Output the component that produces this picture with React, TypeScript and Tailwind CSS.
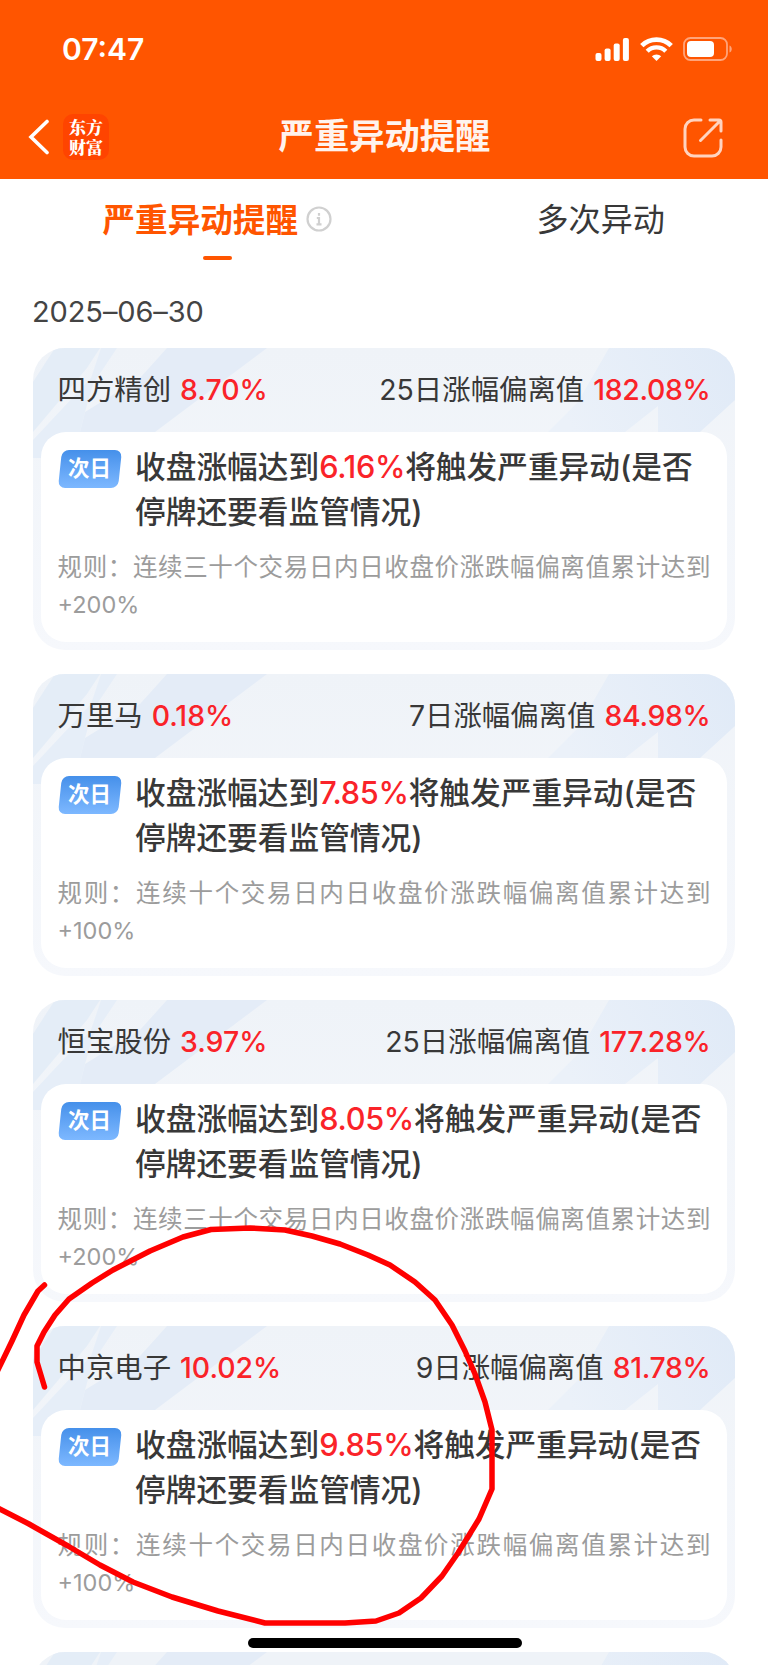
const alerts = [
  { name: '四方精创', change: '8.70%', days: '25', deviation: '182.08%', trigger: '6.16%', period: '三十', limit: '+200%' },
  { name: '万里马', change: '0.18%', days: '7', deviation: '84.98%', trigger: '7.85%', period: '十', limit: '+100%' },
  { name: '恒宝股份', change: '3.97%', days: '25', deviation: '177.28%', trigger: '8.05%', period: '三十', limit: '+200%' },
  { name: '中京电子', change: '10.02%', days: '9', deviation: '81.78%', trigger: '9.85%', period: '十', limit: '+100%' },
]

const StatusBar = () => (
  <div className="flex h-[96px] items-center justify-between pr-[35px] pl-[62px]">
    <span className="pt-[2px] text-[30px] leading-none font-semibold">07:47</span>
    <div className="flex items-center gap-[10px] pt-px">
      <svg width="35" height="24" viewBox="0 0 35 24" fill="currentColor">
        <rect x="0.5" y="16" width="6" height="8" rx="2" />
        <rect x="9.6" y="11.5" width="6" height="12.5" rx="2" />
        <rect x="18.7" y="6.5" width="6" height="17.5" rx="2" />
        <rect x="27.900" y="1" width="6" height="23" rx="2" />
      </svg>
      <svg width="33" height="24" viewBox="0 0 33 24" fill="none" stroke="currentColor">
        <path d="M1.8 8.6a21 21 0 0 1 29.4 0" strokeWidth="4.8" />
        <path d="M7.2 14.2a13.2 13.2 0 0 1 18.6 0" strokeWidth="4.4" />
        <path d="M16.5 24l-4.7-4.7a6.8 6.8 0 0 1 9.4 0z" fill="currentColor" stroke="none" />
      </svg>
      <svg width="50" height="24" viewBox="0 0 50 24" fill="none">
        <rect x="1" y="1" width="43" height="22" rx="6.5" stroke="#ffa47a" strokeWidth="1.8" />
        <rect x="4" y="4" width="27" height="16" rx="4" fill="#fff" />
        <path d="M46.5 8.5c3 1 3 6 0 7z" fill="#ffa47a" />
      </svg>
    </div>
  </div>
)

const NavBar = () => (
  <div className="flex h-[83px] items-center justify-between pr-[45px] pl-7">
    <div className="-mt-[2px] flex w-[101px] items-center gap-[14px]">
      <svg width="21" height="36" viewBox="0 0 21 36" fill="none" stroke="currentColor" strokeWidth="3.6">
        <path d="M19 2.500L3 18l16 15.500" strokeLinecap="round" strokeLinejoin="miter" />
      </svg>
      <div className="flex size-[46px] flex-col items-center justify-center rounded-[10px] bg-[#ff4400] font-['Noto_Serif_CJK_SC','Noto_Sans_CJK_SC',serif] text-[17px] leading-[20px] font-black">
        <span>东方</span>
        <span>财富</span>
      </div>
    </div>
    <h1 className="-mt-px pl-[18px] text-[35.300px] leading-none font-bold whitespace-nowrap text-[#fff3ee]">严重异动提醒</h1>
    <div className="flex w-[101px] justify-end">
      <svg width="40" height="40" viewBox="0 0 40 40" fill="none" stroke="#ffd3bf" strokeWidth="3">
        <path d="M18 2h-7a9 9 0 0 0-9 9v18a9 9 0 0 0 9 9h18a9 9 0 0 0 9-9v-7" strokeLinecap="round" />
        <path d="M27 2h9a2 2 0 0 1 2 2v9M37 3L17.500 22.500" strokeLinecap="round" />
      </svg>
    </div>
  </div>
)

const Tabs = () => (
  <div className="grid grid-cols-2 pt-[21px] leading-[40px]">
    <div className="flex flex-col pl-[102.500px]">
      <div className="flex items-center gap-[8px] text-[#ff5500]">
        <span className="text-[32.600px] font-bold">严重异动提醒</span>
        <svg className="-mt-[3px]" width="26" height="26" viewBox="0 0 26 26" fill="none" stroke="#d0d0d0" strokeWidth="2.2">
          <circle cx="13" cy="13" r="11.500" />
          <path d="M13 7v2.800M10.800 12H13v6M10.500 18.300h5" />
        </svg>
      </div>
      <div className="mt-4 ml-[100px] h-[4px] w-[29px] rounded-full bg-[#ff5500]" />
    </div>
    <div className="pl-[152.500px] text-[32.100px] text-[#383838]">多次异动</div>
  </div>
)

// Pale diagonal bands behind the card heading
const CardPattern = () => (
  <svg className="absolute inset-x-0 top-0" width="702" height="120" viewBox="0 0 702 120" fill="none">
    <path d="M22 0H67L54 20L0 84V34z" fill="#e4edf7" />
    <path d="M68 0H84L60 36L52 64L47 84L30 110H0V92L58 30z" fill="#e6eef8" />
    <path d="M134 0H234L122 84H47L52 64L107 30z" fill="#e4ecf7" />
    <path d="M576 0H702V52L667 84H625V58L592 84H515L545 54z" fill="url(#corner)" />
    <defs>
      <linearGradient id="corner" x1="700" y1="0" x2="540" y2="84" gradientUnits="userSpaceOnUse">
        <stop stopColor="#e0eaf7" />
        <stop offset="1" stopColor="#ebf1f9" />
      </linearGradient>
    </defs>
  </svg>
)

const Deviation = ({ alert }: { alert: (typeof alerts)[number] }) => (
  <section className="relative h-[302px] shrink-0 overflow-hidden rounded-[32px] bg-linear-to-b from-[#eff3f8] to-[#f6f8fc] p-2">
    <CardPattern />
    <div className="relative flex h-[76px] items-center justify-between px-[16.500px] pb-[7px] text-[28.400px] text-[#383838]">
      <div className="flex gap-[9px]">
        <span>{alert.name}</span>
        <span className="font-medium text-[#fa2329]">{alert.change}</span>
      </div>
      <div className="flex gap-[9px]">
        <span>{alert.days}日涨幅偏离值</span>
        <span className="font-medium tracking-[-0.300px] text-[#fa2329]">{alert.deviation}</span>
      </div>
    </div>
    <div className="relative h-[210px] rounded-[25px] bg-white px-[16.500px] pt-[12px]">
      <div className="flex gap-[13.500px]">
        <div className="relative mt-[6px] flex h-[38px] w-[64px] shrink-0 items-center justify-center">
          <div className="absolute inset-x-[2px] inset-y-0 -skew-x-6 rounded-[7px] bg-linear-to-b from-[#4590ea] to-[#7db8ff]" />
          <span className="relative text-[21.500px] leading-none font-bold text-white">次日</span>
        </div>
        <p className="text-[30.700px] leading-[45px] font-medium whitespace-nowrap text-[#383838]">
          收盘涨幅达到<span className="tracking-[-0.300px] text-[#fa2329]">{alert.trigger}</span>将触发严重异动(是否
          <br />
          停牌还要看监管情况)
        </p>
      </div>
      <p className="mt-[15px] text-justify text-[24.500px] leading-[37px] text-[#9c9c9c]">
        规则：连续{alert.period}个交易日内日收盘价涨跌幅偏离值累计达到<span className="text-[23.500px]">{alert.limit}</span>
      </p>
    </div>
  </section>
)

const Annotation = () => (
  <svg
    className="absolute inset-0"
    width="768"
    height="1665"
    viewBox="0 0 768 1665"
    fill="none"
    stroke="#ff0000"
    strokeWidth="5.500"
    strokeLinecap="round"
    strokeLinejoin="round"
  >
    <path d="M44.500 1285L38 1291L24 1315L12 1341L-3 1372" />
    <path d="M-4 1507L29 1524L68 1546L100 1565L133 1582L172 1597L218 1611L265 1623H345L376 1621L399 1613L421 1598L442 1576L458 1553L479 1519L492 1489V1430L485 1402L475 1374L465 1351L452 1325L435 1300L415 1282L390 1265L368 1255L340 1244L312 1236L285 1230L250 1228L211 1229.500L183 1237L150 1251L113 1270L92 1283L69 1299L55 1315L44 1332L37 1346V1362L44.500 1387" />
  </svg>
)

export default function App() {
  return (
    <div
      lang="zh-CN"
      className="relative flex h-[1665px] w-[768px] flex-col overflow-hidden bg-white font-['Inter','Noto_Sans_CJK_SC',sans-serif]"
    >
      <header className="h-[179px] shrink-0 bg-[#ff5500] text-white">
        <StatusBar />
        <NavBar />
      </header>
      <Tabs />
      <main className="flex flex-col gap-6 px-[33px]">
        <div className="mt-[32px] mb-[-8px] -ml-px text-[29px] leading-[40px] tracking-[-0.100px] text-[#444444]">2025–06–30</div>
        {alerts.map((alert) => (
          <Deviation key={alert.name} alert={alert} />
        ))}
        <section className="relative h-[302px] shrink-0 overflow-hidden rounded-[32px] bg-[#eff3f8]">
          <CardPattern />
        </section>
      </main>
      <div className="absolute bottom-[17px] left-[248px] h-[10px] w-[274px] rounded-full bg-black" />
      <Annotation />
    </div>
  )
}
